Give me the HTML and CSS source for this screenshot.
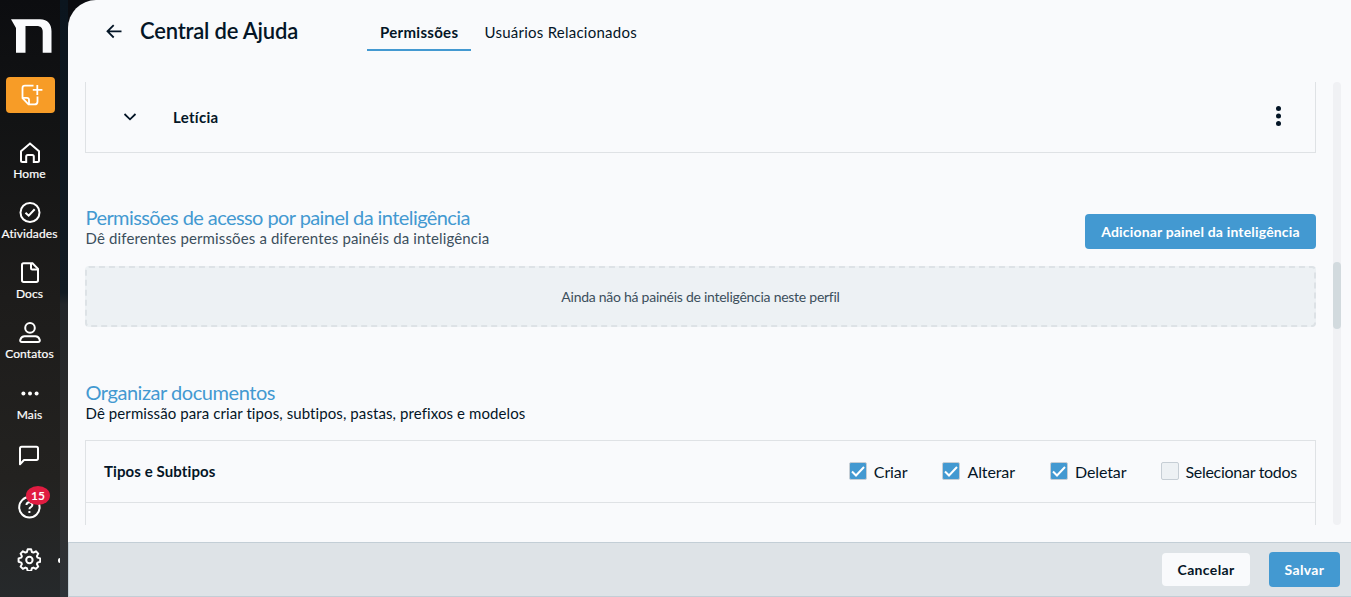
FILE: index.html
```html
<!DOCTYPE html>
<html lang="pt-BR">
<head>
    <meta charset="UTF-8">
    <meta name="viewport" content="width=device-width, initial-scale=1.0">
    <title>Central de Ajuda</title>
    <link rel="stylesheet" href="styles.css">
</head>
<body>
    <nav class="sidebar">
        <div class="menu">
            <svg class="logo" width="42" height="36" viewBox="0 0 42 36"><path d="M0 1.300h29c8 0 11.500 5 11.500 12v21.500H31.700V14c0-4-2-6-6-6H14.500v26.800H5V10z" fill="#fafbfd"/></svg>
            <button class="new">
                <svg width="24" height="24" viewBox="0 0 24 24" fill="none" stroke="#fff" stroke-width="1.800"><path d="M14.500 2.600H6q-2.500 0-2.500 2.300v10.300l6 6.200h6q3 0 3-3V13.500"/><path d="M4 14.800h3.800q2.200 0 2.200 2.200v4M18.300 2v10M13.800 6.900h9.600"/></svg>
            </button>
            <a class="item">
                <svg class="icon" viewBox="0 0 22 22"><path d="M2 9.200 11 1.500l9 7.700v9.300q0 1.500-1.500 1.500h-3.700v-5.500q0-1.500-1.500-1.500H8.700q-1.500 0-1.500 1.500V20H3.500Q2 20 2 18.500z"/></svg>
                <span>Home</span>
            </a>
            <a class="item">
                <svg class="icon" viewBox="0 0 22 22"><circle cx="11" cy="10.500" r="9.500"/><path d="m6.500 10.700 3.200 3 6-6.500"/></svg>
                <span>Atividades</span>
            </a>
            <a class="item">
                <svg class="icon" viewBox="0 0 22 22"><path d="M4.500 1.300h9l5.500 5.500v11.500q0 1.700-1.700 1.700H4.700Q3 20 3 18.300V3q0-1.700 1.500-1.700z"/><path d="M12 1.500v4.800q0 1.200 1.200 1.200h5.300"/></svg>
                <span>Docs</span>
            </a>
            <a class="item">
                <svg class="icon" viewBox="0 0 22 22"><circle cx="11" cy="5.900" r="4.800"/><path d="M5.500 14.200h11q3 0 4.200 3.500.5 2.300-1.700 2.300H3q-2.200 0-1.700-2.300 1.200-3.500 4.200-3.500z"/></svg>
                <span>Contatos</span>
            </a>
            <a class="item more">
                <svg class="icon" viewBox="0 0 22 22"><g fill="#fff" stroke="none"><circle cx="4.400" cy="11.500" r="2"/><circle cx="11" cy="11.500" r="2"/><circle cx="17.600" cy="11.500" r="2"/></g></svg>
                <span>Mais</span>
            </a>
            <a class="tool">
                <svg class="icon" viewBox="0 0 22 22"><path d="M2 20.300V4.500q0-1.700 1.700-1.700h14.700q1.600 0 1.600 1.700v9.800q0 1.700-1.600 1.700H6z" stroke-linejoin="round"/></svg>
            </a>
            <a class="tool help">
                <svg class="icon" viewBox="0 0 24 24"><circle cx="12.400" cy="11.300" r="10.200"/><path d="M9.400 9q.3-2.700 3-2.700t3 2.500q0 1.500-1.500 2.300-1.500.8-1.500 2.200M12.400 15v2"/></svg>
                <span class="badge">15</span>
            </a>
            <a class="tool gear">
                <svg class="icon" viewBox="0 0 24 24"><path stroke-linejoin="round" d="M10.700 2.300h3.400l.8 2.700 1.500.6 2.500-1.300 2.300 2.300-1.300 2.500.6 1.500 2.700.8v3.400l-2.700.8-.6 1.500 1.300 2.500-2.300 2.300-2.500-1.300-1.500.6-.8 2.700h-3.400l-.8-2.700-1.500-.6-2.500 1.300-2.300-2.300 1.300-2.500-.6-1.500-2.700-.8v-3.400l2.700-.8.6-1.500-1.300-2.500 2.300-2.300 2.500 1.300 1.500-.6z"/><circle cx="12.400" cy="13" r="3.200"/></svg>
                <i class="handle"></i>
            </a>
        </div>
    </nav>
    <div class="page">
        <header class="header">
            <svg class="back" width="18" height="16" viewBox="0 0 18 16"><path d="M16.500 8.300H2.500M8.700 2.100 2.500 8.300l6.200 6.200"/></svg>
            <h1>Central de Ajuda</h1>
            <div class="tabs">
                <a class="tab active">Permissões</a>
                <a class="tab">Usuários Relacionados</a>
            </div>
        </header>
        <div class="scroll-area">
            <main class="content">
                <div class="card person">
                    <svg class="chevron" width="14" height="8" viewBox="0 0 14 8"><path d="m1.500 1 5.500 5.300L12.500 1"/></svg>
                    <strong>Letícia</strong>
                    <svg class="dots" width="6" height="20" viewBox="0 0 6 20"><circle cx="3.500" cy="2.600" r="2.500"/><circle cx="3.500" cy="10" r="2.500"/><circle cx="3.500" cy="17.400" r="2.500"/></svg>
                </div>
                <section class="intel">
                    <div class="section-head">
                        <div>
                            <h2>Permissões de acesso por painel da inteligência</h2>
                            <p class="muted">Dê diferentes permissões a diferentes painéis da inteligência</p>
                        </div>
                        <button class="btn primary">Adicionar painel da inteligência</button>
                    </div>
                    <div class="empty">Ainda não há painéis de inteligência neste perfil</div>
                </section>
                <section class="docs">
                    <h2>Organizar documentos</h2>
                    <p>Dê permissão para criar tipos, subtipos, pastas, prefixos e modelos</p>
                    <div class="card types">
                        <strong>Tipos e Subtipos</strong>
                        <div class="checks">
                            <label><span class="box on"><svg width="14" height="11" viewBox="0 0 14 11"><path d="m1 5.500 4 4L13 1"/></svg></span>Criar</label>
                            <label><span class="box on"><svg width="14" height="11" viewBox="0 0 14 11"><path d="m1 5.500 4 4L13 1"/></svg></span>Alterar</label>
                            <label><span class="box on"><svg width="14" height="11" viewBox="0 0 14 11"><path d="m1 5.500 4 4L13 1"/></svg></span>Deletar</label>
                            <label class="all"><span class="box"></span>Selecionar todos</label>
                        </div>
                    </div>
                    <div class="card next"></div>
                </section>
            </main>
            <div class="scrollbar"><div class="thumb"></div></div>
        </div>
        <footer class="footer">
            <button class="btn cancel">Cancelar</button>
            <button class="btn primary save">Salvar</button>
        </footer>
    </div>
</body>
</html>
```
FILE: styles.css
```css
* {
    box-sizing: border-box;
}
body {
    margin: 0;
    height: 597px;
    display: flex;
    overflow: hidden;
    font-family: Lato, "Liberation Sans", sans-serif;
    font-size: 15px;
    color: #041526;
    background: #0b0c10;
}
h1, h2, p {
    margin: 0;
}
strong {
    font-weight: 700;
}
button {
    border: none;
    padding: 0;
    font-family: inherit;
    cursor: pointer;
}
.sidebar {
    width: 68px;
    flex: none;
    background: linear-gradient(#0b151e, #121b23 49%, #22262a 51%, #302e2e 80%, #2d3238);
}
.menu {
    width: 60px;
    height: 597px;
    padding-top: 18px;
    display: flex;
    flex-direction: column;
    align-items: center;
    background: linear-gradient(#0c0d10, #121314 20%, #1d1c1b 50%, #232220 80%, #26292b);
}
.logo {
    margin-left: 3px;
    flex: none;
}
.new {
    width: 49px;
    height: 36px;
    flex: none;
    margin: 23px 0 29px 1px;
    display: flex;
    align-items: center;
    justify-content: center;
    background: #f79c27;
    border-radius: 4px;
}
.item {
    width: 60px;
    height: 60px;
    flex: none;
    display: flex;
    flex-direction: column;
    align-items: center;
    font-size: 12px;
    line-height: 16px;
    letter-spacing: 0.1px;
    color: #fff;
    -webkit-text-stroke: 0.2px #fff;
}
.item span {
    margin: 2px 1px 0 0;
}
.icon {
    width: 22px;
    height: 22px;
    flex: none;
    fill: none;
    stroke: #fff;
    stroke-width: 2;
}
.item.more span {
    margin-top: 3px;
}
.tool {
    height: 52px;
    padding-top: 2px;
    margin-left: -2px;
    display: flex;
    position: relative;
}
.help .icon,
.gear .icon {
    width: 24px;
    height: 24px;
}
.badge {
    position: absolute;
    left: 9px;
    top: -8px;
    width: 24px;
    height: 19px;
    border-radius: 50%;
    background: #e01c41;
    color: #fff;
    font-size: 12px;
    font-weight: 700;
    line-height: 19px;
    text-align: center;
}
.handle {
    position: absolute;
    left: 41px;
    top: 13px;
    width: 2px;
    height: 5px;
    border-radius: 2px 0 0 2px;
    background: #fff;
}
.page {
    flex: 1;
    min-width: 0;
    display: flex;
    flex-direction: column;
    background: #f9fafc;
    border-top-left-radius: 28px;
    overflow: hidden;
}
.header {
    height: 82px;
    flex: none;
    padding: 11px 0 0 37px;
    display: flex;
    align-items: flex-start;
}
.back {
    margin: 12px 17px 0 0;
    fill: none;
    stroke: #041526;
    stroke-width: 1.8;
}
h1 {
    width: 227px;
    font-size: 22px;
    line-height: 40px;
    font-weight: 600;
    letter-spacing: -0.2px;
}
.tabs {
    display: flex;
}
.tab {
    height: 40px;
    padding: 0 13.5px;
    line-height: 43px;
    letter-spacing: 0.25px;
    border-bottom: 2px solid transparent;
}
.tab.active {
    width: 104px;
    padding: 0 13px;
    font-weight: 700;
    letter-spacing: 0.3px;
    border-color: #4399d1;
}
.scroll-area {
    height: 443px;
    flex: none;
    display: flex;
    padding: 0 10px 0 17px;
    overflow: hidden;
}
.content {
    width: 1231px;
    overflow: hidden;
}
.card {
    border: 1px solid #dfe2e5;
    display: flex;
    align-items: center;
}
.person {
    height: 71px;
    border-top: none;
    padding: 0 34px 0 37px;
    letter-spacing: 0.3px;
}
.chevron {
    fill: none;
    stroke: #041526;
    stroke-width: 1.8;
    margin-right: 36px;
}
.dots {
    margin: -2px 0 0 auto;
    fill: #041526;
}
.intel {
    margin-top: 52px;
}
.section-head {
    display: flex;
    justify-content: space-between;
    height: 61px;
}
.section-head .btn {
    width: 231px;
    margin-top: 9px;
    letter-spacing: 0.17px;
}
h2 {
    padding-left: 0.5px;
    font-size: 20px;
    line-height: 24px;
    font-weight: 400;
    letter-spacing: -0.58px;
    color: #4399d1;
}
p {
    padding-left: 0.5px;
    line-height: 18px;
    letter-spacing: 0.09px;
}
.muted {
    color: #3c4f5c;
    letter-spacing: 0.14px;
}
.btn {
    height: 35px;
    font-size: 14px;
    font-weight: 700;
    border-radius: 4px;
}
.primary {
    color: #fff;
    background: #4399d1;
}
.empty {
    height: 61px;
    display: flex;
    align-items: center;
    justify-content: center;
    border: 2px dashed #dde2e6;
    border-radius: 4px;
    background: #edf1f4;
    color: #3c4f5c;
    font-size: 14px;
    letter-spacing: -0.26px;
}
.docs {
    margin-top: 53px;
}
.docs h2 {
    letter-spacing: -0.45px;
}
.types {
    height: 63px;
    margin-top: 18px;
    padding: 0 18px;
    justify-content: space-between;
}
.types strong {
    margin-top: -2px;
    letter-spacing: 0.1px;
}
.next {
    height: 60px;
    border-top: none;
}
.checks {
    display: flex;
    gap: 35px;
    font-size: 16px;
    letter-spacing: -0.1px;
}
.checks label {
    display: flex;
    align-items: center;
}
.checks .all {
    letter-spacing: -0.28px;
}
.box {
    width: 18px;
    height: 18px;
    margin: -1px 7px 0 0;
    display: flex;
    align-items: center;
    justify-content: center;
    border: 1px solid #c6ced5;
    border-radius: 2px;
    background: #edf1f4;
}
.all .box {
    margin-right: 6px;
}
.box.on {
    background: #4399d1;
}
.box svg {
    fill: none;
    stroke: #fff;
    stroke-width: 2;
}
.scrollbar {
    width: 8px;
    margin-left: auto;
    padding-top: 180px;
    border-radius: 4px;
    background: #f0f1f4;
}
.thumb {
    height: 67px;
    border-radius: 4px;
    background: #d2dade;
}
.footer {
    height: 55px;
    margin-top: 17px;
    padding-right: 11px;
    display: flex;
    align-items: center;
    justify-content: flex-end;
    gap: 19px;
    border: 1px solid #c3ced6;
    border-right: none;
    background: #dee3e7;
}
.footer .btn {
    letter-spacing: 0.35px;
}
.cancel {
    width: 88px;
    height: 33px;
    color: #041526;
    background: #f9fafc;
}
.save {
    width: 71px;
}
```
